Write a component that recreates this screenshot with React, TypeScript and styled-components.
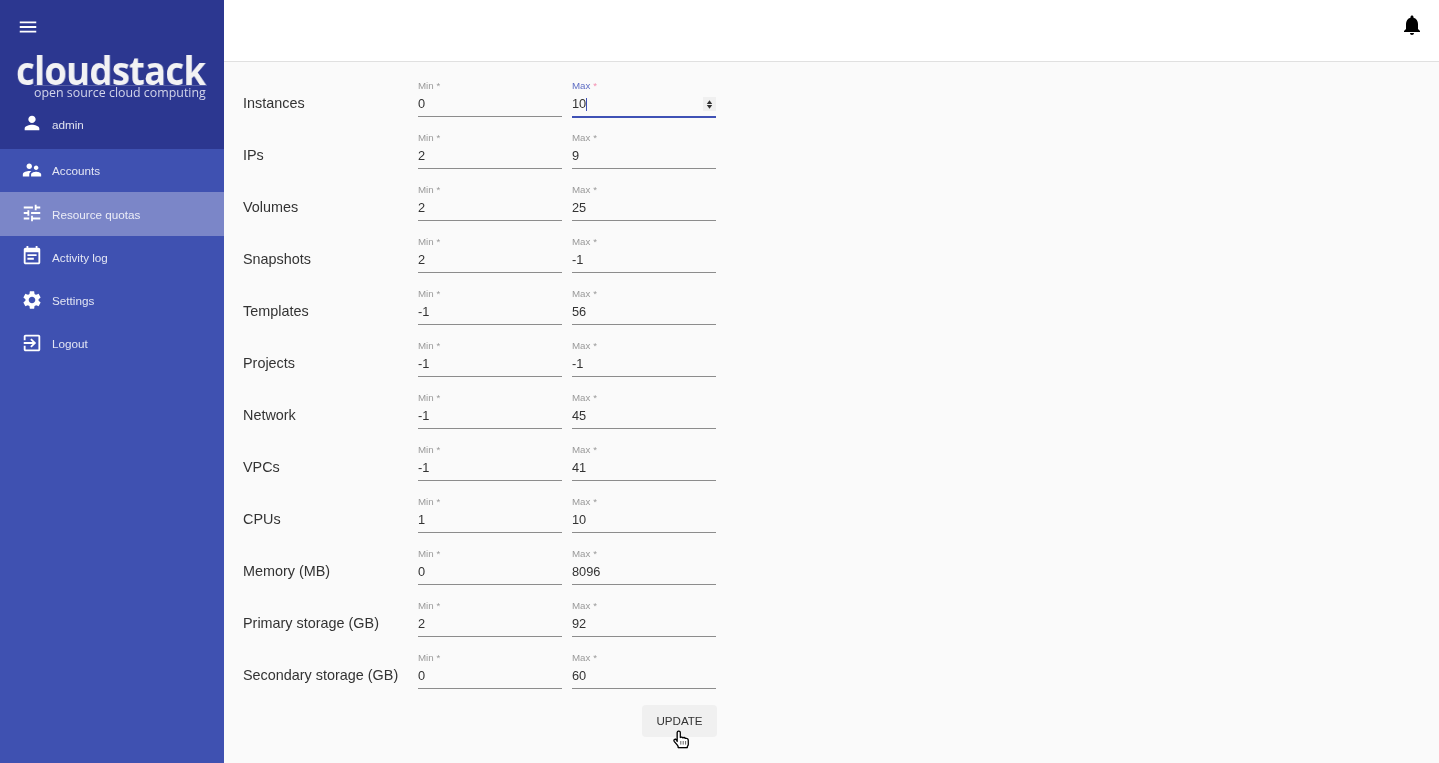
import React from "react";
import styled, { createGlobalStyle } from "styled-components";

const Global = createGlobalStyle`
  html, body { margin: 0; padding: 0; height: 100%; background: #fafafa; }
  #root { height: 100%; }
  * { box-sizing: border-box; }
  body { font-family: "Liberation Sans", Arial, sans-serif; overflow: hidden; }
`;

const Page = styled.div`
  display: flex;
  width: 1439px;
  height: 763px;
  overflow: hidden;
  will-change: transform;
`;

const Sidebar = styled.aside`
  width: 224px;
  flex: none;
  background: #3f51b1;
  display: flex;
  flex-direction: column;
`;

const SidebarTop = styled.div`
  background: #2c3790;
  height: 149px;
  display: flex;
  flex-direction: column;
`;

const MenuButton = styled.div`
  height: 54px;
  padding: 16px 0 0 17px;
  color: #fff;
  line-height: 0;
`;

const Logo = styled.div`
  height: 46px;
  padding-left: 16px;
  display: flex;
  flex-direction: column;
`;

const LogoName = styled.div`
  font-family: "Open Sans", sans-serif;
  font-weight: 700;
  font-size: 40px;
  line-height: 32px;
  letter-spacing: -0.9px;
  color: #f2f2f4;
  white-space: nowrap;
  transform: scaleX(0.915);
  transform-origin: left center;
  filter: blur(0.35px);
`;

const LogoTag = styled.div`
  font-family: "Open Sans", sans-serif;
  font-size: 12.4px;
  line-height: 13px;
  margin: -1px 0 0 18px;
  width: 173px;
  color: #d3d5ea;
  white-space: nowrap;
  border-top: 1px solid rgba(255, 255, 255, 0.2);
`;

const UserRow = styled.div`
  display: flex;
  align-items: center;
  height: 48px;
  padding-left: 21px;
  color: #fff;
  font-size: 11.7px;
`;

const ItemIcon = styled.span<{ $nudge?: number }>`
  width: 22px;
  height: 22px;
  margin: 0 9px ${(p) => p.$nudge ?? 2}px 0;
  flex: none;
  line-height: 0;
`;

const ItemText = styled.span`
  color: rgba(255, 255, 255, 0.85);
`;

const NavList = styled.nav`
  display: flex;
  flex-direction: column;
`;

const NavItem = styled.div<{ $active?: boolean; $height: number }>`
  display: flex;
  align-items: center;
  height: ${(p) => p.$height}px;
  padding-left: 21px;
  color: #fff;
  font-size: 11.7px;
  background: ${(p) => (p.$active ? "#7b86c8" : "transparent")};
`;

const Column = styled.div`
  flex: 1;
  min-width: 0;
  display: flex;
  flex-direction: column;
`;

const AppBar = styled.header`
  height: 62px;
  flex: none;
  background: #fff;
  border-bottom: 1px solid #e0e0e0;
  display: flex;
  justify-content: flex-end;
  padding: 13px 15px 0 0;
  color: #000;
`;

const Main = styled.main`
  flex: 1;
  padding: 18px 0 0 19px;
  background: #fafafa;
`;

const Form = styled.form`
  width: 474px;
  display: flex;
  flex-direction: column;
  gap: 14px;
`;

const Row = styled.div`
  display: grid;
  grid-template-columns: 175px 144px 154px;
  height: 38px;
`;

const RowLabel = styled.div`
  font-size: 14.4px;
  line-height: 18px;
  padding-top: 14px;
  color: #333;
  white-space: nowrap;
`;

const Field = styled.label<{ $focused?: boolean; $gap?: boolean }>`
  position: relative;
  display: flex;
  flex-direction: column;
  margin-left: ${(p) => (p.$gap ? "10px" : "0")};
  width: 144px;
  height: ${(p) => (p.$focused ? "38px" : "37px")};
  border-bottom: ${(p) => (p.$focused ? "2px solid #3f51b5" : "1px solid #8c8c8c")};
`;

const FieldLabel = styled.span<{ $focused?: boolean }>`
  font-size: 13px;
  line-height: 16px;
  height: 12px;
  white-space: nowrap;
  transform: scale(0.75);
  transform-origin: top left;
  color: ${(p) => (p.$focused ? "#5f6ec4" : "#9a9a9a")};
`;

const Star = styled.span<{ $focused?: boolean }>`
  color: ${(p) => (p.$focused ? "#f48fb1" : "inherit")};
`;

const FieldInput = styled.input`
  border: 0;
  outline: 0;
  background: transparent;
  padding: 0;
  width: 100%;
  height: 20px;
  margin-top: 1px;
  font-family: "Liberation Sans", Arial, sans-serif;
  font-size: 12.8px;
  color: #333;
  caret-color: transparent;
  appearance: textfield;
  &::-webkit-inner-spin-button,
  &::-webkit-outer-spin-button { appearance: none; margin: 0; display: none; }
`;

const Caret = styled.span`
  position: absolute;
  left: 14px;
  top: 18px;
  width: 1px;
  height: 13px;
  background: #3f51b5;
`;

const Spinner = styled.span`
  position: absolute;
  right: 0;
  top: 17px;
  width: 13px;
  height: 14px;
  background: #f0f0f0;
  color: #333;
  line-height: 0;
`;

const Actions = styled.div`
  display: flex;
  justify-content: flex-end;
  margin-top: 1px;
  position: relative;
`;

const UpdateButton = styled.button`
  width: 75px;
  height: 32px;
  border: 0;
  border-radius: 4px;
  padding: 0 0 1px;
  background: #f0f0f0;
  color: #333;
  font-family: "Liberation Sans", Arial, sans-serif;
  font-size: 11.6px;
`;

const Pointer = styled.svg`
  position: absolute;
  left: 430px;
  top: 25px;
  pointer-events: none;
  filter: drop-shadow(0.5px 0.5px 0.5px rgba(0, 0, 0, 0.35));
`;

const I = ({ d, size = 22 }: { d: string; size?: number }) => (
  <svg width={size} height={size} viewBox="0 0 24 24" fill="currentColor">
    <path d={d} />
  </svg>
);

const icons = {
  menu: "M3 18h18v-2H3v2zm0-5h18v-2H3v2zm0-7v2h18V6H3z",
  person: "M12 12c2.21 0 4-1.79 4-4s-1.79-4-4-4-4 1.79-4 4 1.79 4 4 4zm0 2c-2.67 0-8 1.34-8 4v2h16v-2c0-2.66-5.33-4-8-4z",
  people: "M16.5 12c1.38 0 2.49-1.12 2.49-2.5S17.88 7 16.5 7C15.12 7 14 8.12 14 9.5s1.12 2.5 2.5 2.5zM9 11c1.66 0 2.99-1.34 2.99-3S10.66 5 9 5C7.34 5 6 6.34 6 8s1.34 3 3 3zm7.5 3c-1.83 0-5.5.92-5.5 2.75V19h11v-2.25c0-1.83-3.67-2.75-5.5-2.75zM9 13c-2.33 0-7 1.17-7 3.5V19h7v-2.25c0-.85.33-2.34 2.37-3.47C10.5 13.1 9.66 13 9 13z",
  tune: "M3 17v2h6v-2H3zM3 5v2h10V5H3zm10 16v-2h8v-2h-8v-2h-2v6h2zM7 9v2H3v2h4v2h2V9H7zm14 4v-2H11v2h10zm-6-4h2V7h4V5h-4V3h-2v6z",
  event: "M17 10H7v2h10v-2zm2-7h-1V1h-2v2H8V1H6v2H5c-1.11 0-1.99.9-1.99 2L3 19c0 1.1.89 2 2 2h14c1.1 0 2-.9 2-2V5c0-1.1-.9-2-2-2zm0 16H5V8h14v11zm-5-5H7v2h7v-2z",
  settings: "M19.14 12.94c.04-.3.06-.61.06-.94 0-.32-.02-.64-.07-.94l2.03-1.58c.18-.14.23-.41.12-.61l-1.92-3.32c-.12-.22-.37-.29-.59-.22l-2.39.96c-.5-.38-1.03-.7-1.62-.94l-.36-2.54c-.04-.24-.24-.41-.48-.41h-3.84c-.24 0-.43.17-.47.41l-.36 2.54c-.59.24-1.13.57-1.62.94l-2.39-.96c-.22-.08-.47 0-.59.22L2.74 8.87c-.12.21-.08.47.12.61l2.03 1.58c-.05.3-.09.63-.09.94s.02.64.07.94l-2.03 1.58c-.18.14-.23.41-.12.61l1.92 3.32c.12.22.37.29.59.22l2.39-.96c.5.38 1.03.7 1.62.94l.36 2.54c.05.24.24.41.48.41h3.84c.24 0 .44-.17.47-.41l.36-2.54c.59-.24 1.13-.56 1.62-.94l2.39.96c.22.08.47 0 .59-.22l1.92-3.32c.12-.22.07-.47-.12-.61l-2.01-1.58zM12 15.6c-1.98 0-3.6-1.62-3.6-3.6s1.62-3.6 3.6-3.6 3.6 1.62 3.6 3.6-1.62 3.6-3.6 3.6z",
  exit: "M10.09 15.59L11.5 17l5-5-5-5-1.41 1.41L12.67 11H3v2h9.67l-2.58 2.59zM19 3H5c-1.11 0-2 .9-2 2v4h2V5h14v14H5v-4H3v4c0 1.1.89 2 2 2h14c1.1 0 2-.9 2-2V5c0-1.1-.9-2-2-2z",
  bell: "M12 22c1.1 0 2-.9 2-2h-4c0 1.1.89 2 2 2zm6-6v-5c0-3.07-1.64-5.64-4.5-6.32V4c0-.83-.67-1.5-1.5-1.5s-1.5.67-1.5 1.5v.68C7.63 5.36 6 7.92 6 11v5l-2 2v1h16v-1l-2-2z",
};

const nav = [
  { label: "Accounts", icon: icons.people, height: 43 },
  { label: "Resource quotas", icon: icons.tune, height: 44, active: true },
  { label: "Activity log", icon: icons.event, height: 43, nudge: 4 },
  { label: "Settings", icon: icons.settings, height: 43 },
  { label: "Logout", icon: icons.exit, height: 43 },
];

const rows: [string, string, string][] = [
  ["Instances", "0", "10"],
  ["IPs", "2", "9"],
  ["Volumes", "2", "25"],
  ["Snapshots", "2", "-1"],
  ["Templates", "-1", "56"],
  ["Projects", "-1", "-1"],
  ["Network", "-1", "45"],
  ["VPCs", "-1", "41"],
  ["CPUs", "1", "10"],
  ["Memory (MB)", "0", "8096"],
  ["Primary storage (GB)", "2", "92"],
  ["Secondary storage (GB)", "0", "60"],
];

export default function App() {
  return (
    <Page>
      <Global />
      <Sidebar>
        <SidebarTop>
          <MenuButton><I d={icons.menu} /></MenuButton>
          <Logo>
            <LogoName>cloudstack</LogoName>
            <LogoTag>open source cloud computing</LogoTag>
          </Logo>
          <UserRow>
            <ItemIcon><I d={icons.person} /></ItemIcon>
            <ItemText>admin</ItemText>
          </UserRow>
        </SidebarTop>
        <NavList>
          {nav.map((n) => (
            <NavItem key={n.label} $active={n.active} $height={n.height}>
              <ItemIcon $nudge={n.nudge}><I d={n.icon} /></ItemIcon>
              <ItemText>{n.label}</ItemText>
            </NavItem>
          ))}
        </NavList>
      </Sidebar>
      <Column>
        <AppBar><I d={icons.bell} size={24} /></AppBar>
        <Main>
          <Form onSubmit={(e) => e.preventDefault()}>
            {rows.map(([label, min, max], i) => (
              <Row key={label}>
                <RowLabel>{label}</RowLabel>
                <Field>
                  <FieldLabel>Min <Star>*</Star></FieldLabel>
                  <FieldInput type="number" defaultValue={min} />
                </Field>
                <Field $gap $focused={i === 0}>
                  <FieldLabel $focused={i === 0}>Max <Star $focused={i === 0}>*</Star></FieldLabel>
                  <FieldInput type="number" defaultValue={max} />
                  {i === 0 && <Caret />}
                  {i === 0 && (
                    <Spinner>
                      <svg width="13" height="14" viewBox="0 0 13 14" fill="currentColor">
                        <path d="M3.8 6.9h5.4L6.5 3.2zM3.8 8h5.4L6.5 11.7z" />
                      </svg>
                    </Spinner>
                  )}
                </Field>
              </Row>
            ))}
            <Actions>
              <UpdateButton type="submit">UPDATE</UpdateButton>
              <Pointer width="18" height="19" viewBox="0 0 18 19">
                <path
                  d="M4.2 11.5V2.6c0-.9.6-1.5 1.5-1.5s1.6.6 1.6 1.5v4.9c.9-.5 2-.4 2.5.4.8-.5 2-.3 2.5.5 1-.4 2.8.2 2.9 1.6l.1 4.3c0 .9-.4 1.5-1 2.3v.9H5.2v-.9c-.3-.8-.6-1.2-1.2-1.9l-2.6-3.1c-.7-.9-.5-1.7.1-2.1.6-.4 1.5-.2 2.1.5z"
                  fill="#fff"
                  stroke="#000"
                  strokeWidth="1.25"
                  strokeLinejoin="round"
                />
                <path d="M7.8 11v3.6M10.2 11v3.6M12.6 11v3.6" stroke="#555" strokeWidth="0.9" />
              </Pointer>
            </Actions>
          </Form>
        </Main>
      </Column>
    </Page>
  );
}
